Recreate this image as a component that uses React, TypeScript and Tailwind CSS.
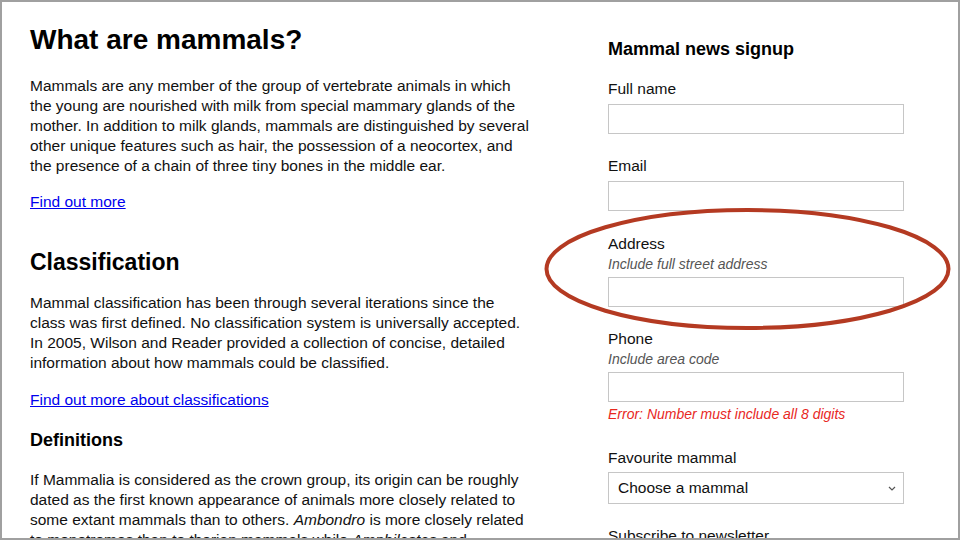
import React from "react";

const Field = ({
  label,
  hint,
  error,
  className,
}: {
  label: string;
  hint?: string;
  error?: string;
  className?: string;
}) => (
  <div className={className}>
    <div className="text-[15.5px] leading-[20px] text-[#111]">{label}</div>
    {hint && (
      <div className="mt-[1px] text-[14px] leading-[18px] italic text-[#555]">{hint}</div>
    )}
    <div className={hint ? "mt-[4px] h-[30px] border border-[#c6c6c6] bg-white" : "mt-[5px] h-[30px] border border-[#c6c6c6] bg-white"} />
    {error && (
      <div className="mt-[3px] text-[14px] leading-[18px] italic text-[#e8281e]">{error}</div>
    )}
  </div>
);

export default function App() {
  return (
    <div className="relative w-[960px] h-[540px] overflow-hidden bg-white border-2 border-[#a0a0a0] font-['Liberation_Sans',Arial,sans-serif] text-[#111]">
      <div className="flex">
        {/* article */}
        <div className="w-[530px] pl-[28px] pt-[19px]">
          <h1 className="text-[28px] leading-[38px] font-bold text-black">What are mammals?</h1>
          <p className="mt-[17px] w-[504px] text-[15.5px] leading-[20px]">
            Mammals are any member of the group of vertebrate animals in which the young are nourished with milk from special mammary glands of the mother. In addition to milk glands, mammals are distinguished by several other unique features such as hair, the possession of a neocortex, and the presence of a chain of three tiny bones in the middle ear.
          </p>
          <a href="#" className="mt-[16px] block w-fit text-[15.5px] leading-[20px] text-[#0000ee] underline">
            Find out more
          </a>
          <h2 className="mt-[36px] text-[23px] leading-[29px] font-bold text-black">Classification</h2>
          <p className="mt-[16px] w-[492px] text-[15.5px] leading-[20px]">
            Mammal classification has been through several iterations since the class was first defined. No classification system is universally accepted. In 2005, Wilson and Reader provided a collection of concise, detailed information about how mammals could be classified.
          </p>
          <a href="#" className="mt-[17px] block w-fit text-[15.5px] leading-[20px] text-[#0000ee] underline">
            Find out more about classifications
          </a>
          <h3 className="mt-[19px] text-[18px] leading-[22px] font-bold text-black">Definitions</h3>
          <p className="mt-[19px] w-[504px] text-[15.5px] leading-[20px]">
            If Mammalia is considered as the crown group, its origin can be roughly dated as the first known appearance of animals more closely related to some extant mammals than to others. <i>Ambondro</i> is more closely related to monotremes than to therian mammals while <i>Amphilestes</i> and <i>Amphitherium</i> are more closely related to the therians.
          </p>
        </div>

        {/* signup form */}
        <div className="ml-[76px] w-[296px] pt-[36px]">
          <h2 className="text-[18px] leading-[22px] font-bold text-black">Mammal news signup</h2>
          <Field className="mt-[19px]" label="Full name" />
          <Field className="mt-[22px]" label="Email" />
          <Field className="mt-[23px]" label="Address" hint="Include full street address" />
          <Field
            className="mt-[22px]"
            label="Phone"
            hint="Include area code"
            error="Error: Number must include all 8 digits"
          />
          <div className="mt-[25px]">
            <div className="text-[15.5px] leading-[20px]">Favourite mammal</div>
            <div className="mt-[4px] h-[32px] border border-[#c6c6c6] flex items-center justify-between pl-[9px] pr-[7px]">
              <span className="text-[15.5px] text-[#111]">Choose a mammal</span>
              <svg width="8" height="5" viewBox="0 0 8 5" fill="none">
                <path d="M1 1l3 3 3-3" stroke="#555" strokeWidth="1.2" />
              </svg>
            </div>
          </div>
          <div className="mt-[22px] text-[15.5px] leading-[20px]">Subscribe to newsletter</div>
        </div>
      </div>

      {/* annotation ring */}
      <svg
        className="absolute -left-[2px] -top-[2px] pointer-events-none"
        width="960"
        height="540"
        viewBox="0 0 960 540"
      >
        <ellipse cx="747.5" cy="269" rx="201" ry="59" fill="none" stroke="#b43a22" strokeWidth="4" />
      </svg>
    </div>
  );
}
